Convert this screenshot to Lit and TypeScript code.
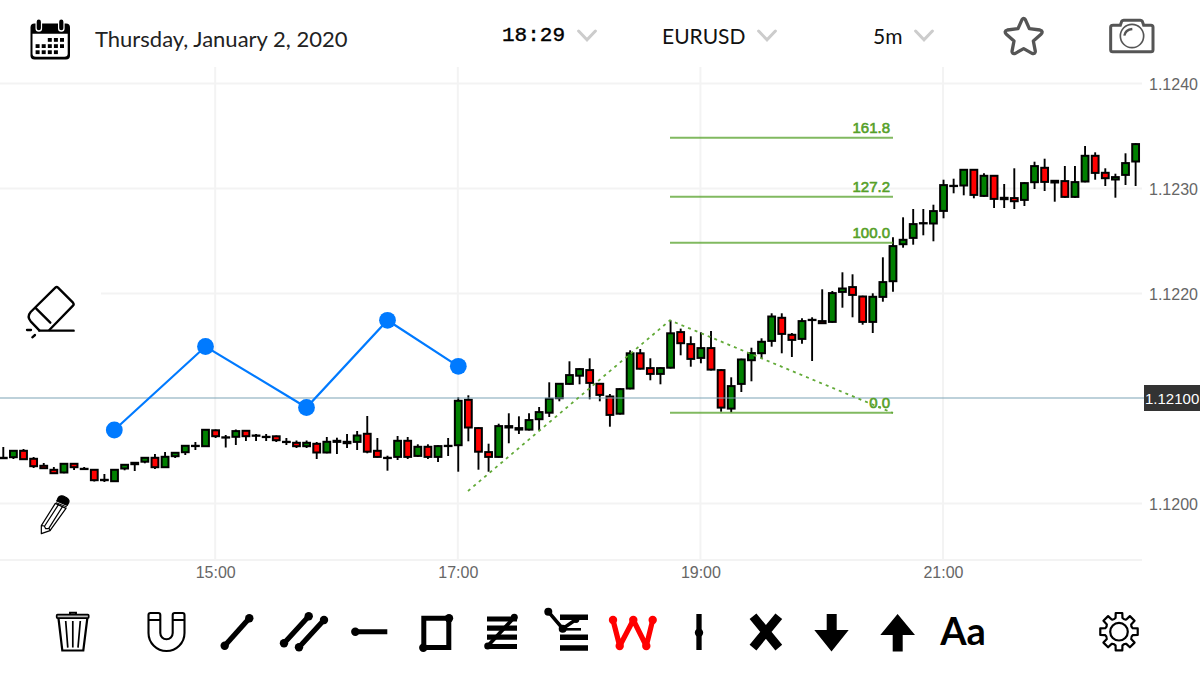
import { LitElement, html, svg, css, type TemplateResult } from "lit";
import { customElement, property, state } from "lit/decorators.js";

/* One candle: high, body top, body bottom, low, kind (g = up, r = down, k = unchanged). */
type Candle = [number, number, number, number, string];

const CANDLES: Candle[] = [
  [447, 457, 459, 459, "k"], [450, 450, 458, 459, "g"], [449, 450, 460, 460, "r"], [457, 458, 467, 468, "r"],
  [463, 465, 469, 469, "r"], [467, 469, 474, 474, "r"], [463, 463, 473.3, 473.3, "g"], [463, 463, 468, 470, "r"],
  [467, 468, 469.3, 469.3, "k"], [469, 469, 481, 481.5, "r"], [474, 479, 481, 482, "k"], [469, 469, 482, 482, "g"],
  [464, 464, 469.3, 470.3, "g"], [462, 462, 465, 471, "g"], [457, 457, 462.5, 463.3, "g"], [454, 457, 468, 469, "r"],
  [452, 456, 468, 468, "g"], [452, 452, 457, 458, "g"], [445, 445, 453, 455, "g"], [442, 445, 446.7, 450, "k"],
  [429, 429, 447, 447, "g"], [429.5, 429.5, 437, 438, "r"], [435, 436.5, 438, 447.5, "k"], [429.5, 430.3, 437.6, 445, "g"],
  [430, 430, 437, 441, "r"], [434, 434.7, 436.3, 441, "k"], [434, 436, 437.7, 441, "k"], [435.5, 435.5, 441, 442, "r"],
  [438, 441, 442.4, 445, "k"], [440.5, 442, 447, 448, "r"], [440.5, 442, 447, 448, "g"], [442, 443, 453.3, 459, "r"],
  [437, 441, 453.3, 453.3, "g"], [437.7, 440, 442.7, 454, "r"], [434, 441, 444, 448, "r"], [431, 434.7, 442.7, 450, "g"],
  [416, 433, 452.5, 453.3, "r"], [438, 450, 457.7, 457.7, "r"], [455.7, 457, 458.5, 470.7, "k"], [436, 440, 457.7, 460, "g"],
  [437, 440, 457.7, 459, "r"], [444.3, 446, 456.7, 457, "g"], [444.3, 446, 457.7, 459, "r"], [445.3, 445.3, 457.7, 462, "g"],
  [438, 445, 446.5, 456, "k"], [397.3, 400, 446, 471.7, "g"], [395.3, 399, 428.3, 441.3, "r"], [427.3, 427.3, 452.5, 469.7, "r"],
  [443.7, 451.3, 457.7, 471.7, "r"], [423.7, 425.3, 457.7, 457.7, "g"], [413.3, 425.3, 428.3, 443.3, "r"], [416.3, 427.3, 430.4, 434, "r"],
  [413.3, 419.3, 430.4, 430.4, "g"], [407, 411.3, 420, 430.4, "g"], [382.3, 398, 413.5, 417, "g"], [383, 383, 399, 401.3, "g"],
  [361.3, 374.3, 384.7, 384.7, "g"], [368.3, 368.3, 376.5, 384.3, "g"], [358.3, 369.3, 383.7, 399.3, "r"], [383, 383, 395.7, 401.3, "r"],
  [394, 395.7, 415.7, 426.7, "r"], [388.3, 388.3, 414.5, 414.5, "g"], [350.3, 352.5, 389.3, 389.3, "g"], [349, 352.5, 369.5, 369.5, "r"],
  [358.3, 367.3, 374.7, 380.3, "r"], [367.3, 367.3, 374.7, 384.3, "g"], [320.3, 332.5, 368.5, 368.5, "g"], [328.6, 331.3, 344, 355.3, "r"],
  [336.3, 343.3, 359.7, 366.7, "r"], [332.3, 347.3, 358.7, 363.3, "g"], [331, 347.3, 370.4, 370.4, "r"], [369.3, 369.3, 408.4, 411.7, "r"],
  [377.3, 385.3, 409.4, 412.3, "g"], [358.7, 358.7, 384.7, 392, "g"], [347.7, 352.3, 361, 381.3, "g"], [338.3, 341, 354, 358, "g"],
  [313.3, 315.7, 341.7, 346.7, "g"], [313.3, 317, 334.7, 353.3, "r"], [333, 334, 340.7, 357, "r"], [318.3, 320.3, 339.7, 343.7, "g"],
  [317.3, 319, 320.5, 361, "k"], [289.3, 320.3, 324, 324, "r"], [291, 292.3, 322.7, 322.7, "g"], [272.3, 287.7, 292.7, 307.7, "g"],
  [274.3, 286.3, 295.7, 317.3, "r"], [295.7, 295.7, 322.7, 324.7, "r"], [293.3, 296, 322.7, 333, "g"], [257.3, 281.3, 297.7, 301.7, "g"],
  [237.3, 245.3, 282, 291.7, "g"], [217.3, 239, 245, 247.7, "g"], [209, 223.3, 238.7, 244.7, "g"], [209, 222.3, 223.7, 235.3, "k"],
  [204.7, 210.3, 224.3, 241.3, "g"], [179.7, 184.3, 211.7, 218.3, "g"], [178.7, 185, 186.4, 193.3, "k"], [169, 169, 186.3, 195.3, "g"],
  [169, 169, 195.7, 198.3, "r"], [173.3, 175, 196.7, 196.7, "g"], [175, 175, 199.7, 208, "r"], [184, 197, 200, 208, "g"],
  [168.3, 197.3, 202, 209, "r"], [182.3, 182.3, 200.7, 206, "g"], [161.7, 165.3, 183, 189, "g"], [158.7, 167, 182.7, 191, "r"],
  [180, 180, 183.3, 201.7, "g"], [166, 180.3, 197.7, 198, "r"], [166, 181.3, 197.7, 198, "g"], [146, 155, 182.3, 182.3, "g"],
  [152.3, 155, 173.7, 179.7, "r"], [168.3, 172, 179, 186, "r"], [173.7, 176.3, 180.3, 197.7, "g"], [153.3, 162.3, 175.7, 185, "g"],
  [143.3, 143.3, 162.3, 186, "g"],
];

const FIRST_X = 3.3;
const STEP_X = 10.11;
const FILL: Record<string, string> = { g: "#008000", r: "#ff0000", k: "#000" };

const PRICES: [string, number][] = [["1.1240", 83.5], ["1.1230", 188.5], ["1.1220", 293.5], ["1.1200", 503.5]];
const HOURS: [string, number][] = [["15:00", 215.2], ["17:00", 457.8], ["19:00", 700.4], ["21:00", 943]];
const LEVELS: [string, number][] = [["161.8", 137.7], ["127.2", 196.7], ["100.0", 242.8], ["0.0", 412.8]];
const WAVE: [number, number][] = [[114.3, 430], [205.5, 346.5], [306.5, 407.5], [387.5, 320.3], [458.3, 366.3]];

@customElement("price-chart")
export class PriceChart extends LitElement {
  static styles = css`
    :host { display: block; }
    .chart { display: block; width: 100%; height: auto; font-family: "Liberation Sans", Arial, sans-serif; }
    .grid { stroke: #f3f3f3; stroke-width: 2; }
    .axis { font-size: 16px; fill: #666; }
    .hour { text-anchor: middle; }
    .wick { stroke: #000; stroke-width: 1.9; }
    .body { stroke: #000; stroke-width: 2; }
    .quote { stroke: #7ba3b5; stroke-opacity: 0.5; stroke-width: 1.8; }
    .tag { fill: #333; }
    .tag-text { font-size: 15px; fill: #fff; }
    .level { stroke: #55a028; stroke-opacity: 0.74; stroke-width: 2; }
    .swing { fill: none; stroke: #62aa38; stroke-width: 1.8; stroke-dasharray: 3 4.1; }
    .level-text { font-size: 15px; fill: #55a028; stroke: #55a028; stroke-width: 0.6; text-anchor: end; }
    .wave { fill: none; stroke: #007aff; stroke-width: 2.2; }
    .knob { fill: #007aff; }
  `;

  private candle([high, top, bottom, low, kind]: Candle, i: number) {
    const x = FIRST_X + i * STEP_X;
    return svg`<line class="wick" x1=${x} x2=${x} y1=${high} y2=${low}></line>
      <rect class="body" x=${x - 3.4} width="6.8" y=${top + 0.8}
        height=${Math.max(0.3, bottom - top - 1.6)} fill=${FILL[kind]}></rect>`;
  }

  render() {
    return html`<svg class="chart" viewBox="0 67 1200 535" role="img" aria-label="EURUSD">
      ${PRICES.map(([, y]) => svg`<line class="grid" x1="0" x2="1142" y1=${y} y2=${y}></line>`)}
      ${HOURS.map(([, x]) => svg`<line class="grid" x1=${x} x2=${x} y1="67" y2="560"></line>`)}
      <line class="grid" x1="0" x2="1142" y1="560" y2="560"></line>
      ${CANDLES.map((c, i) => this.candle(c, i))}
      <line class="quote" x1="0" x2="1144" y1="398" y2="398"></line>
      ${LEVELS.map(([label, y]) => svg`<line class="level" x1="670" x2="893" y1=${y} y2=${y}></line>
        <text class="level-text" x="890" y=${y - 5}>${label}</text>`)}
      <polyline class="swing" points="468,491 670,320.3 893,413"></polyline>
      <polyline class="wave" points=${WAVE.map((p) => p.join(",")).join(" ")}></polyline>
      ${WAVE.map(([x, y]) => svg`<circle class="knob" cx=${x} cy=${y} r="8.4"></circle>`)}
      ${PRICES.map(([label, y]) => svg`<text class="axis" x="1149" y=${y + 6.5}>${label}</text>`)}
      ${HOURS.map(([label, x]) => svg`<text class="axis hour" x=${x + 0.5} y="577.5">${label}</text>`)}
      <rect class="tag" x="1144" y="385" width="56" height="26"></rect>
      <text class="tag-text" x="1145" y="404">1.12100</text>
    </svg>`;
  }
}

/* Outline of an eight-toothed cog around (cx, cy). */
function cog(cx: number, cy: number): string {
  const at = (r: number, deg: number) => {
    const a = (deg * Math.PI) / 180;
    return `${(cx + r * Math.sin(a)).toFixed(2)} ${(cy - r * Math.cos(a)).toFixed(2)}`;
  };
  let d = "";
  for (let t = 0; t < 8; t++) {
    const m = t * 45;
    d += `${t ? "L" : "M"}${at(14.2, m - 14)}L${at(19, m - 10)}L${at(19, m + 10)}L${at(14.2, m + 14)}`;
    d += `Q${at(12.8, m + 22.5)} ${at(14.2, m + 31)}`;
  }
  return d + "Z";
}

const dot = (x: number, y: number, r = 4.2) => svg`<circle cx=${x} cy=${y} r=${r} stroke="none"></circle>`;

const TOOLS: { name: string; art: TemplateResult }[] = [
  { name: "Line", art: svg`<path d="M20.7 43.7L45.3 16.3" stroke-width="5.2"/>${dot(20.7, 43.7)}${dot(45.3, 16.3)}` },
  { name: "Channel", art: svg`<path d="M14 41.3L38.7 14.3M29 45.3L54 18" stroke-width="5.2"/>${dot(14, 41.3)}${dot(38.7, 14.3)}${dot(29, 45.3)}${dot(54, 18)}` },
  { name: "Ray", art: svg`<path d="M19.3 29.7H51.3" stroke-width="5"/>${dot(19.3, 29.7)}` },
  { name: "Rectangle", art: svg`<path d="M21.8 16.2H46.8V45.5H21.8Z" stroke-width="5" fill="none"/>${dot(47, 16.3)}${dot(21.3, 45.7)}` },
  { name: "Retracement", art: svg`<path d="M19 17H49M19 26.2H49M19 35.2H49M19 44.5H49" stroke-width="5.2"/><path d="M19.7 44L46.3 15.3" stroke-width="3.8"/>${dot(19.7, 44, 3.5)}${dot(46.3, 15.3, 3.5)}` },
  { name: "Extension", art: svg`<path d="M26 15.3H54M26 35.2H54M26 46H54" stroke-width="5.4"/><path d="M28 27.3H47" stroke-width="2.6"/><path d="M14.3 9.7L28.7 26.7L42 17.5" fill="none" stroke-width="3.6"/>${dot(14.3, 9.7, 4)}${dot(28.7, 26.7, 4)}${dot(42, 17.5, 3.4)}` },
  { name: "Wave", art: svg`<g stroke="#f00" fill="#f00"><path d="M13 18L19.7 44L33.3 18L46.3 44L52.7 18" fill="none" stroke-width="5.2" stroke-linejoin="round"/>${dot(13, 18)}${dot(19.7, 44)}${dot(33.3, 18)}${dot(46.3, 44)}${dot(52.7, 18)}</g>` },
  { name: "Vertical", art: svg`<path d="M33 12V48" stroke-width="5.3"/>${dot(33, 30.7)}` },
  { name: "Cross", art: svg`<path d="M21 14.2L46.8 45.6M46.8 14.2L21 45.6" stroke-width="8.8"/>` },
  { name: "Down", art: svg`<path d="M28.7 12H38.7V28H50.7L33.5 49.4L16.3 28H28.7Z" stroke="none"/>` },
  { name: "Up", art: svg`<path d="M28.7 49.6H38.7V33H51L33.6 12L16.3 33H28.7Z" stroke="none"/>` },
];

const chevron = html`<svg class="chevron" width="20" height="14" viewBox="0 0 20 14">
  <path d="M1.6 2L10 10.8L18.4 2" fill="none" stroke="#ccc" stroke-width="3" stroke-linecap="round"/></svg>`;

@customElement("pick-list")
export class PickList extends LitElement {
  @property() label = "";
  @property() value = "";
  @property({ type: Boolean, reflect: true }) mono = false;

  static styles = css`
    :host { display: block; }
    .field { display: inline-flex; align-items: center; gap: 11px; }
    .select {
      appearance: none; border: 0; padding: 0; margin: 0; background: none; color: #111;
      font-family: Lato, "Open Sans", sans-serif; font-size: 21px; line-height: 28px;
    }
    :host([mono]) .select {
      font-family: "Liberation Mono", "Courier New", monospace; color: #000; -webkit-text-stroke: 0.4px #000;
    }
    .chevron { flex: none; }
  `;

  render() {
    return html`<label class="field">
      <select class="select" aria-label=${this.label}><option>${this.value}</option></select>${chevron}
    </label>`;
  }
}

@customElement("app-root")
export class AppRoot extends LitElement {
  @state() private tool = "Wave";

  static styles = css`
    :host {
      display: flex; flex-direction: column; min-height: 100vh; background: #fff; color: #000;
      font-family: Lato, "Open Sans", sans-serif;
    }
    button { appearance: none; border: 0; padding: 0; margin: 0; background: none; color: inherit; font: inherit; cursor: pointer; }
    svg { display: block; }
    .top {
      display: grid; grid-template-columns: 472fr 160fr 211fr 130fr 106fr 45fr;
      align-items: center; height: 67px; padding: 0 46px 0 30px; box-sizing: border-box;
    }
    .top > * { margin-top: 4px; min-width: 0; }
    .top > .date { display: flex; align-items: center; gap: 25px; justify-self: start; font-size: 22px; line-height: 28px; color: #222; margin-top: 12px; white-space: nowrap; }
    .day { padding-bottom: 2px; }
    .stage { position: relative; }
    .eraser { position: absolute; left: 0; top: 208px; width: 101px; height: 70px; padding-left: 20px; background: #fff; }
    .pencil { position: absolute; left: 36px; top: 423px; width: 40px; height: 50px; }
    .tools { display: flex; align-items: center; padding: 0 48px 12px 40px; }
    .tool { flex: 0 1 66px; height: 60px; min-width: 0; display: flex; align-items: center; justify-content: center; }
    .magnet { margin: 0 5px 0 27px; }
    .settings { margin-left: auto; }
    .text { font-size: 38px; line-height: 56px; padding-bottom: 4px; box-sizing: border-box; font-weight: 700; }
  `;

  private icon(art: TemplateResult) {
    return html`<svg width="66" height="60" viewBox="0 0 66 60" stroke="#000">${art}</svg>`;
  }

  render() {
    return html`
      <header class="top">
        <button class="date">
          <svg width="40" height="42" viewBox="0 0 40 42">
            <rect x="0.5" y="4.5" width="39.5" height="36" rx="4"/>
            <path d="M2.5 14.8H37.7V34.5Q37.7 37.8 34.4 37.8H5.8Q2.5 37.8 2.5 34.5Z" fill="#fff"/>
            <path d="M8.8 3V9.5M31.3 3V9.5" stroke="#fff" stroke-width="6.6" stroke-linecap="round"/>
            <path d="M4.5 0H13V3.6H4.5ZM27 0H36V3.6H27Z" fill="#fff"/>
            <path d="M8.8 2.7V9.2M31.3 2.7V9.2" stroke="#000" stroke-width="4.2" stroke-linecap="round"/>
            ${[[18, 2, 5], [24.2, 0, 5], [30.3, 0, 4]].map(([y, from, to]) =>
              Array.from({ length: to - from }, (_, n) =>
                svg`<rect x=${5.6 + (from + n) * 6.1} y=${y + 1} width="4" height="3.8"></rect>`))}
          </svg>
          <span class="day">Thursday, January 2, 2020</span>
        </button>
        <pick-list mono label="Time" value="18:29"></pick-list>
        <pick-list label="Symbol" value="EURUSD"></pick-list>
        <pick-list label="Interval" value="5m"></pick-list>
        <button aria-label="Favourite">
          <svg width="42" height="42" viewBox="129 45 126 126" fill="none" stroke="#555" stroke-width="10" stroke-linejoin="round">
            <path d="M186 59Q191 51 196 59L208 86L240 90Q251 93 243 103L220 123L226 154Q226 163 216 160L191 146L166 160Q156 163 156 154L162 123L139 103Q131 93 142 90L174 86Z"/>
          </svg>
        </button>
        <button aria-label="Snapshot">
          <svg width="46" height="36" viewBox="446 54 138 108" fill="none" stroke="#555">
            <path d="M456 76H480L484 64Q486 61 490 61H540Q544 61 546 64L550 76H572Q578 76 578 82V149Q578 155 572 155H457Q451 155 451 149V82Q451 76 457 76" stroke-width="9"/>
            <circle cx="515" cy="108" r="35" stroke-width="5"/>
            <path d="M492 107Q495 89 516 87" stroke-width="7"/>
          </svg>
        </button>
      </header>

      <main class="stage">
        <price-chart></price-chart>
        <button class="eraser" aria-label="Eraser">
          <svg width="60" height="60" viewBox="60 30 180 180" fill="none" stroke="#000" stroke-width="7" stroke-linecap="round" stroke-linejoin="round">
            <path d="M118 181L92 154Q80 140 92 126L166 53Q170 49 174 53L219 98Q223 103 219 107L148 180"/>
            <path d="M108 115L151 158M118 182H221M81 180H93M97 202L105 195"/>
          </svg>
        </button>
        <button class="pencil" aria-label="Pencil">
          <svg width="40" height="50" viewBox="108 660 120 150" fill="#fff" stroke="#000" stroke-width="3.6" stroke-linejoin="round">
            <path d="M166 700L124 767L124 791L150 782L198 715Z"/>
            <path d="M124 767L133 768L137 776L148 776L151 782M134 768L176 703M146 776L188 709" fill="none"/>
            <path d="M172 689Q176 675 190 678L200 683Q211 690 205 700L202 706L170 693Z" fill="#000"/>
            <path d="M168 698L201 711" stroke-width="3"/>
          </svg>
        </button>
      </main>

      <nav class="tools">
        <button class="tool" aria-label="Delete">${this.icon(svg`<g fill="none" stroke-width="1.7">
          <path d="M18.5 16.5L22.3 48.5H43.3L47.3 16.5" stroke-width="2.2"/>
          <rect x="16.7" y="12.7" width="32" height="3.4" rx="0.8" fill="#bbb" stroke-width="1.7"/>
          <path d="M30 12V10.7H36V12" stroke-width="1.9"/>
          <path d="M25.7 19L27.8 45.6M32.8 19V45.6M40.3 19L38 45.6"/></g>`)}</button>
        <button class="tool magnet" aria-label="Magnet">${this.icon(svg`<g fill="none" stroke-width="2.1">
          <path d="M15.5 13Q15.5 11 17.5 11H25.3Q27.3 11 27.3 13V31A6.2 6.2 0 0 0 39.7 31V13Q39.7 11 41.7 11H49.5Q51.5 11 51.5 13V31A18 18 0 0 1 15.5 31Z"/>
          <path d="M15.5 18H27.3M39.7 18H51.5"/></g>`)}</button>
        ${TOOLS.map(({ name, art }) => html`
          <button class="tool" aria-label=${name} aria-pressed=${this.tool === name ? "true" : "false"}
            @click=${() => (this.tool = name)}>${this.icon(art)}</button>`)}
        <button class="tool text">Aa</button>
        <button class="tool settings" aria-label="Settings">${this.icon(svg`<g fill="none" stroke-width="2.2" stroke-linejoin="round">
          <path d=${cog(33, 29.7)}></path><circle cx="33" cy="29.7" r="8.8"></circle></g>`)}</button>
      </nav>
    `;
  }
}
